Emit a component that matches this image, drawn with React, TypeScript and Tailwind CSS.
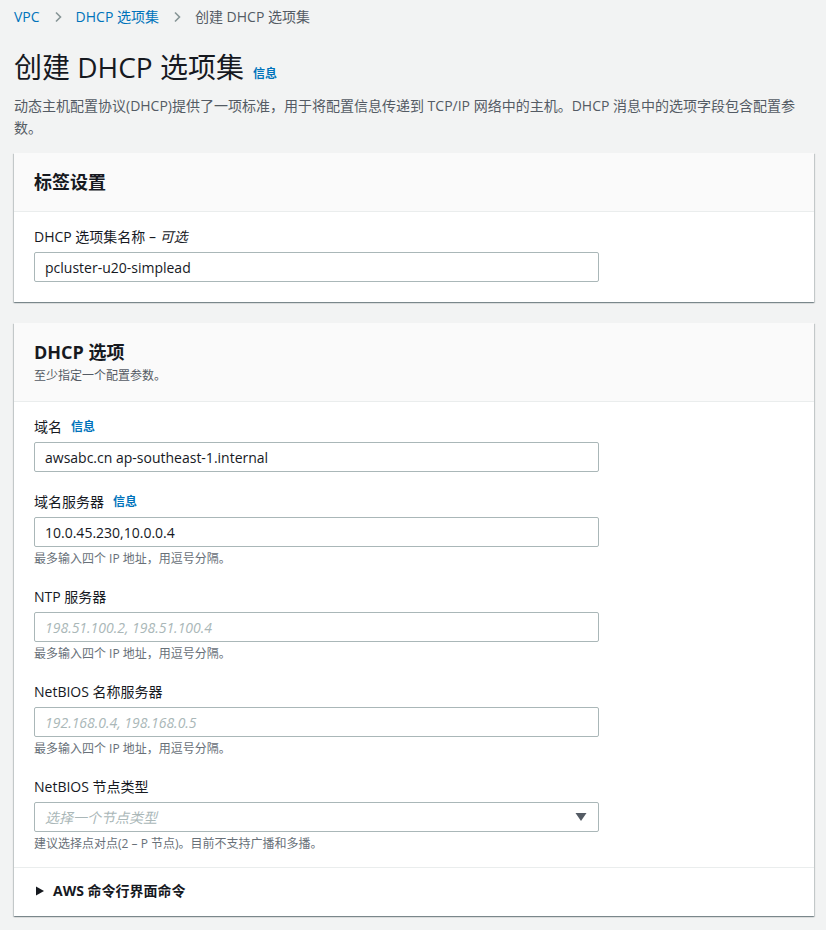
import React from 'react'

const font = { fontFamily: '"Open Sans", "Noto Sans CJK SC", sans-serif' }

const Chevron = () => (
  <svg width="12" height="12" viewBox="0 0 12 12" className="text-[#879596]">
    <path d="M4 1.5 8.5 6 4 10.5" fill="none" stroke="currentColor" strokeWidth="1.6" />
  </svg>
)

const Info = () => <span className="ml-[9px] text-[12px] font-bold text-[#0073bb]">信息</span>

interface FieldProps {
  label: React.ReactNode
  value?: string
  placeholder?: string
  hint?: string
  info?: boolean
  select?: boolean
}

const Field = ({ label, value, placeholder, hint, info, select }: FieldProps) => {
  return (
    <div className="flex flex-col">
      <div className="flex items-center text-[14px] leading-[22px] text-[#16191f]">
        <span>{label}</span>
        {info && <Info />}
      </div>
      <div className="mt-[4px] flex h-[30px] w-[565px] items-center justify-between rounded-[2px] border border-[#aab7b8] bg-white px-[10px] text-[14px]">
        {value ? (
          <span className="text-[#16191f]">{value}</span>
        ) : (
          <span className="italic text-[#aab7b8]">{placeholder}</span>
        )}
        {select && (
          <svg width="12" height="10" viewBox="0 0 12 10" className="mr-[1px] text-[#545b64]">
            <path d="M0.5 1h11L6 9z" fill="currentColor" />
          </svg>
        )}
      </div>
      {hint && <p className="mt-[4px] text-[12px] leading-[16px] text-[#687078]">{hint}</p>}
    </div>
  )
}

const Panel = ({ header, children, pb }: { header: React.ReactNode; children: React.ReactNode; pb: string }) => {
  return (
    <div className="w-[800px] bg-white shadow-[0_1px_1px_0_rgba(0,28,36,0.3),1px_1px_1px_0_rgba(0,28,36,0.15),-1px_1px_1px_0_rgba(0,28,36,0.15)]">
      <div className={`border-b border-[#eaeded] bg-[#fafafa] px-[20px] pt-[18px] ${pb}`}>{header}</div>
      {children}
    </div>
  )
}

const App = () => {
  return (
    <div className="min-h-[930px] bg-[#f2f3f3] pl-[14px] pt-[6px] pb-[14px]" style={font}>
      <nav className="flex h-[22px] items-center gap-[12px] text-[14px] leading-[22px]">
        <span className="text-[#0073bb]">VPC</span>
        <Chevron />
        <span className="text-[#0073bb]">DHCP 选项集</span>
        <Chevron />
        <span className="text-[#545b64]">创建 DHCP 选项集</span>
      </nav>

      <div className="mt-[21px] flex items-baseline">
        <h1 className="text-[28px] leading-[36px] text-[#16191f]">创建 DHCP 选项集</h1>
        <span className="ml-[9px] text-[12px] font-bold text-[#0073bb]">信息</span>
      </div>
      <p className="mt-[10px] w-[800px] text-[14px] leading-[22px] text-[#545b64]">
        动态主机配置协议(DHCP)提供了一项标准，用于将配置信息传递到 TCP/IP 网络中的主机。DHCP 消息中的选项字段包含配置参
        <br />
        数。
      </p>

      <div className="mt-[14px]">
        <Panel pb="pb-[18px]" header={<h2 className="text-[18px] font-bold leading-[22px] text-[#16191f]">标签设置</h2>}>
          <div className="px-[20px] pt-[14px] pb-[20px]">
            <Field
              label={
                <>
                  DHCP 选项集名称 – <i>可选</i>
                </>
              }
              value="pcluster-u20-simplead"
            />
          </div>
        </Panel>
      </div>

      <div className="mt-[21px]">
        <Panel
          pb="pb-[16px]"
          header={
            <>
              <h2 className="text-[18px] font-bold leading-[22px] text-[#16191f]">DHCP 选项</h2>
              <p className="mt-[4px] text-[12px] leading-[18px] text-[#545b64]">至少指定一个配置参数。</p>
            </>
          }
        >
          <div className="flex flex-col gap-[19px] px-[20px] pt-[14px] pb-[15px]">
            <Field label="域名" info value="awsabc.cn ap-southeast-1.internal" />
            <Field label="域名服务器" info value="10.0.45.230,10.0.0.4" hint="最多输入四个 IP 地址，用逗号分隔。" />
            <Field label="NTP 服务器" placeholder="198.51.100.2, 198.51.100.4" hint="最多输入四个 IP 地址，用逗号分隔。" />
            <Field
              label="NetBIOS 名称服务器"
              placeholder="192.168.0.4, 198.168.0.5"
              hint="最多输入四个 IP 地址，用逗号分隔。"
            />
            <Field
              label="NetBIOS 节点类型"
              placeholder="选择一个节点类型"
              hint="建议选择点对点(2 – P 节点)。目前不支持广播和多播。"
              select
            />
          </div>
          <div className="flex items-center border-t border-[#eaeded] px-[20px] pt-[12px] pb-[14px]">
            <svg width="10" height="10" viewBox="0 0 10 10" className="ml-[1px] text-[#16191f]">
              <path d="M1 0.5v9L9 5z" fill="currentColor" />
            </svg>
            <span className="ml-[8px] text-[14px] font-bold leading-[22px] text-[#16191f]">AWS 命令行界面命令</span>
          </div>
        </Panel>
      </div>
    </div>
  )
}

export default App
